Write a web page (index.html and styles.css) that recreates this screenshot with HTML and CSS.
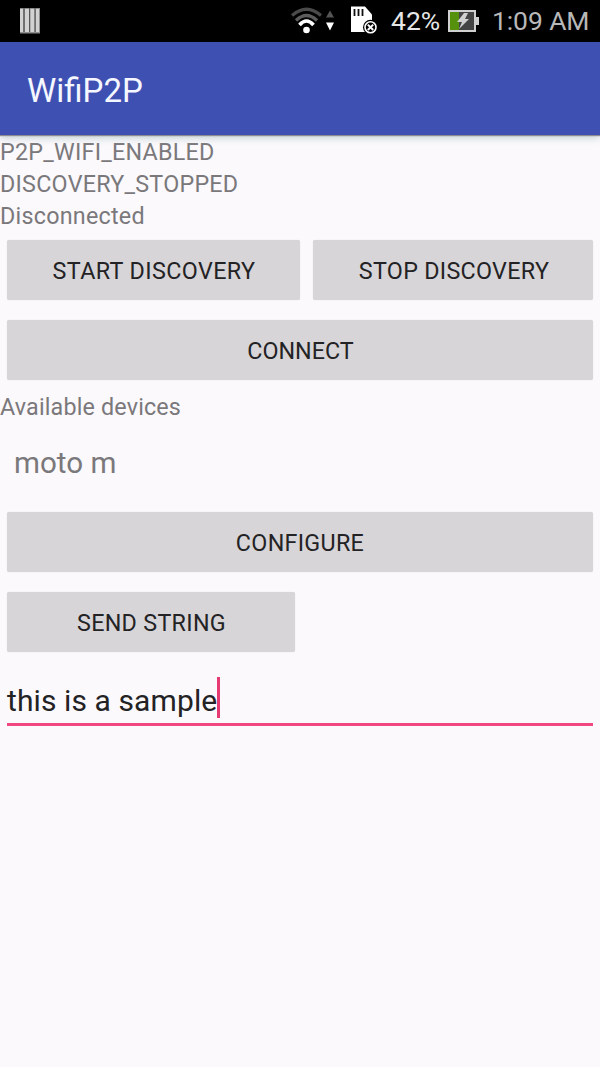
FILE: index.html
```html
<!DOCTYPE html>
<html lang="en">
<head>
<meta charset="utf-8">
<title>WifiP2P</title>
<link rel="stylesheet" href="styles.css">
</head>
<body>
<div class="status-bar">
  <svg class="bars-icon" width="20" height="26" viewBox="0 0 20 26"><path fill="#8d8d8d" d="M0 0h20v25.500H0z"/><path fill="#d2d2d2" d="M0 1h3v23H0zM5 1h4v23H5zM10.500 1h4v23h-4zM16 1h3v23h-3z"/><path stroke="#555" d="M4 0v24M9.500 0v24M15 0v24"/></svg>
  <svg class="wifi-icon" width="44" height="30" viewBox="0 0 44 30" fill="none"><path stroke="#4a4a4a" stroke-width="3.200" d="M1 10.500Q15.500-2 30 10.500"/><path stroke="#5c5c5c" stroke-width="3.200" d="M5 15.500Q15.500 5.500 26 15.500"/><path stroke="#fff" stroke-width="3.600" d="M8.500 20Q15.500 12 22.500 20"/><circle cx="15.500" cy="25" r="3.300" fill="#fff"/><path fill="#555" d="M35 12.500l4-7 4 7z"/><path fill="#fff" d="M35 17.500h8l-4 8z"/></svg>
  <svg class="sd-icon" width="28" height="30" viewBox="0 0 28 30"><path fill="#fff" d="M1 2.500h14l7 8v17.500H1z"/><path stroke="#111" stroke-width="1.800" d="M4.500 5v7M8.500 5v7M12.500 5v7"/><circle cx="20.500" cy="23.300" r="7.500" fill="#000"/><circle cx="20.500" cy="23.300" r="5.500" fill="none" stroke="#fff" stroke-width="1.600"/><path stroke="#fff" stroke-width="2" d="M17.800 20.600l5.400 5.400M23.200 20.600l-5.400 5.400"/></svg>
  <span class="percent">42%</span>
  <svg class="battery-icon" width="32" height="24" viewBox="0 0 32 24"><path fill="#d0d0d0" d="M0 1h28v7h3v8h-3v7H0z"/><path fill="#444" d="M2 3h24v18H2z"/><path fill="#55910d" d="M2 3h9v18H2z"/><path fill="#d0d0d0" d="M16 4h4l-3 6h4l-10 10 3-7H9z"/></svg>
  <span class="clock">1:09 AM</span>
</div>
<header class="app-bar"><h1 class="title">WifiP2P</h1></header>
<main class="content">
  <p class="label">P2P_WIFI_ENABLED</p>
  <p class="label">DISCOVERY_STOPPED</p>
  <p class="label">Disconnected</p>
  <div class="row">
    <button class="btn start">START DISCOVERY</button>
    <button class="btn stop">STOP DISCOVERY</button>
  </div>
  <div class="row"><button class="btn wide connect">CONNECT</button></div>
  <p class="label devices">Available devices</p>
  <div class="device">moto m</div>
  <div class="row"><button class="btn wide">CONFIGURE</button></div>
  <div class="row"><button class="btn send">SEND STRING</button></div>
  <div class="field"><span class="value">this is a sample</span><i class="caret"></i></div>
</main>
</body>
</html>
```
FILE: styles.css
```css
* { box-sizing: border-box; }
body { margin: 0; height: 1067px; overflow: hidden; background: #fbf9fc; font-family: Roboto, sans-serif; color: #7a787b; }
h1, p { margin: 0; font-weight: 400; }
svg { display: block; flex: none; }
.status-bar { display: flex; height: 42px; background: #000; white-space: nowrap; }
.bars-icon { margin: 8px 0 0 20px; }
.wifi-icon { margin: 5px 0 0 251px; }
.sd-icon { margin: 4px 0 0 15px; }
.percent, .clock { line-height: 42px; font-size: 26.500px; }
.percent { width: 57px; margin-left: 13px; color: #e6e6e6; }
.battery-icon { margin-top: 9px; }
.clock { margin-left: 12px; color: #b8b8b8; letter-spacing: -0.100px; }
.app-bar { display: flex; align-items: center; height: 93px; padding: 4px 27px 0; background: #3f50b3; box-shadow: 0 1px 1px #8b8c91, 0 2px 8px #b5c6c9; clip-path: inset(0 0 -12px 0); }
.title { color: #f5f7ff; font-size: 33px; line-height: 40px; }
.content { padding-top: 1px; }
.label { height: 32px; font-size: 23.300px; line-height: 32px; letter-spacing: 0.250px; white-space: nowrap; }
.row { display: flex; gap: 13px; height: 80px; padding: 8px 7px 12px; }
.btn { height: 60px; padding: 0; border: 0; border-radius: 2px; background: #d7d5d8; box-shadow: 0 0 1px #d7d5d8; color: #232224; font: 23.300px/62px Roboto, sans-serif; letter-spacing: 0.300px; text-align: center; }
.start { width: 293px; padding-left: 1px; letter-spacing: 0.400px; }
.stop { width: 280px; padding-left: 2px; }
.wide { width: 586px; }
.connect { padding-left: 1px; letter-spacing: 0; }
.send { width: 288px; padding-left: 1px; }
.devices { margin-top: -1px; letter-spacing: 0.170px; }
.device { height: 81px; padding-left: 14px; font-size: 29.600px; line-height: 80px; }
.field { display: flex; height: 74px; margin: -12px 7px 0; padding-top: 24px; border-bottom: 3px solid #f0477e; color: #232224; font-size: 30px; line-height: 49px; letter-spacing: 0.100px; }
.caret { width: 3px; height: 41px; margin-top: 1px; background: #e63a73; }
```
